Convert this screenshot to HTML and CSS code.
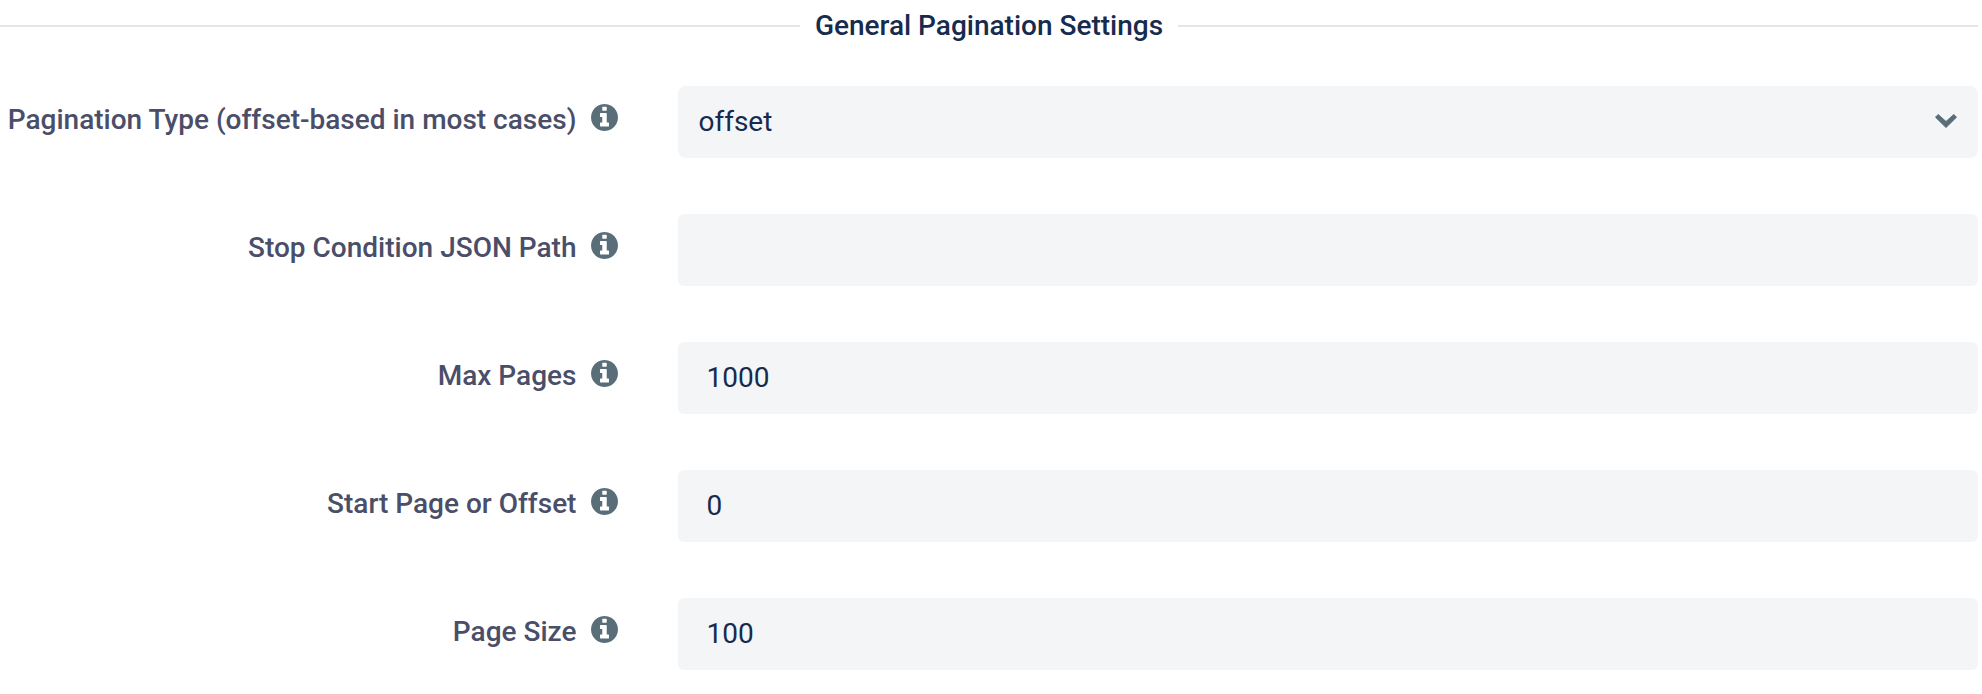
FILE: index.html
```html
<!DOCTYPE html>
<html lang="en">

<head>
  <meta charset="UTF-8" />
  <meta name="viewport" content="width=device-width, initial-scale=1.0" />
  <title>General Pagination Settings</title>
  <link rel="stylesheet" href="styles.css">
</head>

<body>
  <svg class="sprite" aria-hidden="true">
    <symbol id="icon-info" viewBox="128 128 1536 1536">
      <path d="M1152 1376v-160q0-14-9-23t-23-9h-96v-512q0-14-9-23t-23-9h-320q-14 0-23 9t-9 23v160q0 14 9 23t23 9h96v320h-96q-14 0-23 9t-9 23v160q0 14 9 23t23 9h448q14 0 23-9t9-23zm-128-896v-160q0-14-9-23t-23-9h-192q-14 0-23 9t-9 23v160q0 14 9 23t23 9h192q14 0 23-9t9-23zm640 416q0 209-103 385.5t-279.5 279.5-385.5 103-385.5-103-279.5-279.5-103-385.5 103-385.5 279.5-279.5 385.5-103 385.5 103 279.5 279.5 103 385.5z" />
    </symbol>
  </svg>

  <form class="settings">
    <h2 class="section-title">General Pagination Settings</h2>

    <div class="form-row">
      <div class="form-label">
        <label for="paginationType">Pagination Type (offset-based in most cases)</label>
        <svg class="info-icon" aria-hidden="true"><use href="#icon-info" /></svg>
      </div>
      <div class="select-wrap">
        <select id="paginationType">
          <option selected>offset</option>
          <option>page</option>
          <option>cursor</option>
        </select>
        <svg class="chevron" viewBox="0 0 22 14" aria-hidden="true"><path d="M3.2 0.5L11 7.5L18.8 0.5L21.5 3.2L11 13.5L0.5 3.2Z" /></svg>
      </div>
    </div>

    <div class="form-row">
      <div class="form-label">
        <label for="stopCondition">Stop Condition JSON Path</label>
        <svg class="info-icon" aria-hidden="true"><use href="#icon-info" /></svg>
      </div>
      <input type="text" id="stopCondition" />
    </div>

    <div class="form-row">
      <div class="form-label">
        <label for="maxPages">Max Pages</label>
        <svg class="info-icon" aria-hidden="true"><use href="#icon-info" /></svg>
      </div>
      <input type="text" inputmode="numeric" id="maxPages" value="1000" />
    </div>

    <div class="form-row">
      <div class="form-label">
        <label for="startPage">Start Page or Offset</label>
        <svg class="info-icon" aria-hidden="true"><use href="#icon-info" /></svg>
      </div>
      <input type="text" inputmode="numeric" id="startPage" value="0" />
    </div>

    <div class="form-row">
      <div class="form-label">
        <label for="pageSize">Page Size</label>
        <svg class="info-icon" aria-hidden="true"><use href="#icon-info" /></svg>
      </div>
      <input type="text" inputmode="numeric" id="pageSize" value="100" />
    </div>
  </form>
</body>

</html>
```
FILE: styles.css
```css
body {
  margin: 0;
  font-family: Roboto, 'Liberation Sans', sans-serif;
  font-size: 28px;
  line-height: 36px;
  background-color: #fff;
  color: #172b4d;
}

.sprite {
  display: none;
}

.settings {
  display: flex;
  flex-direction: column;
  gap: 56px;
  padding: 8px 4px 24px 0;
}

/* heading with a line on both sides */
.section-title {
  display: flex;
  align-items: center;
  gap: 15px;
  margin: 0 0 -14px;
  font-size: 28px;
  font-weight: 500;
}

.section-title::before,
.section-title::after {
  content: '';
  flex: 1;
  height: 2px;
  background-color: #e5e5e5;
}

.form-row {
  display: grid;
  grid-template-columns: 34.3% 1fr;
  align-items: center;
}

.form-label {
  display: flex;
  align-items: center;
  justify-content: flex-end;
  gap: 15px;
  padding-right: 60px;
  padding-bottom: 4px;
  font-weight: 500;
  color: #4a4e69;
}

.info-icon {
  flex: none;
  width: 27px;
  height: 27px;
  margin-bottom: 6px;
  fill: #596e79;
}

input,
select {
  width: 100%;
  height: 72px;
  padding: 0 28px 2px;
  box-sizing: border-box;
  border: none;
  border-radius: 6px;
  background-color: #f3f5f7;
  color: #172b4d;
  font-family: inherit;
  font-size: 28px;
}

select {
  display: block;
  padding: 0 60px 2px 20px;
  border-radius: 8px;
  appearance: none;
}

input:focus,
select:focus {
  outline: 2px solid #596e79;
}

.select-wrap {
  position: relative;
}

.chevron {
  position: absolute;
  top: 28px;
  right: 21px;
  width: 22px;
  height: 14px;
  fill: #596e79;
  stroke: #596e79;
  stroke-width: 1;
  stroke-linejoin: round;
  pointer-events: none;
}
```
